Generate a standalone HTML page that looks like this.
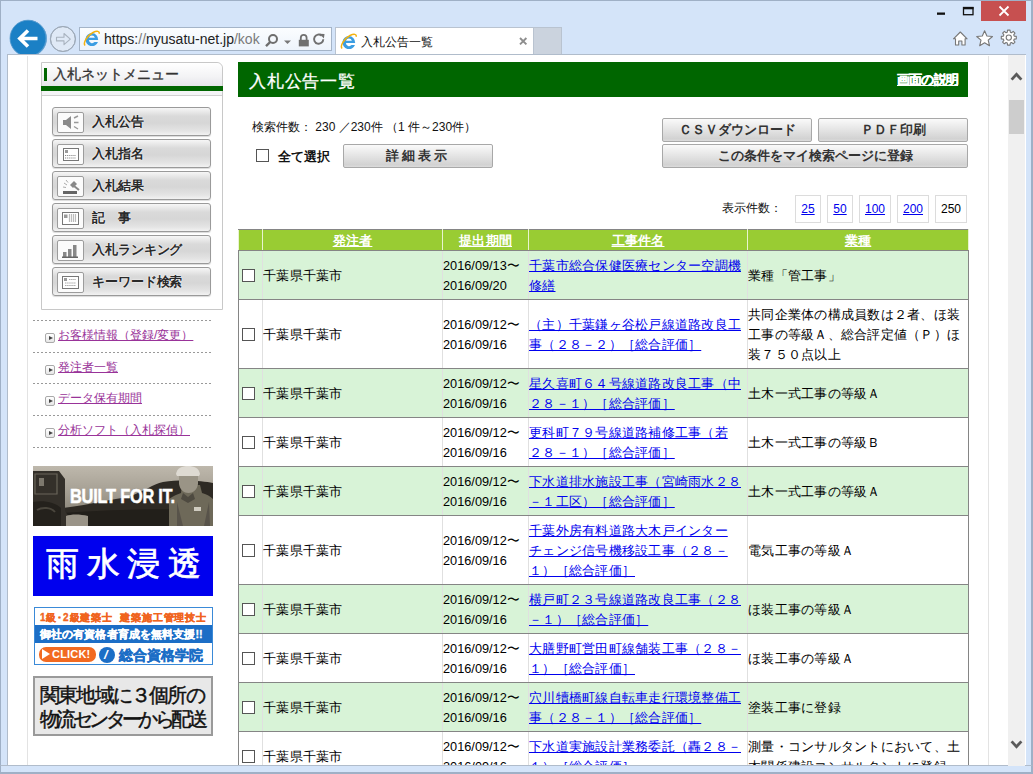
<!DOCTYPE html>
<html><head><meta charset="utf-8">
<style>
*{box-sizing:border-box}
html,body{margin:0;padding:0}
body{width:1033px;height:774px;overflow:hidden;position:relative;background:#d4e4f9;font-family:"Liberation Sans",sans-serif;color:#000}
.abs{position:absolute}
#frame{left:0;top:0;width:1033px;height:774px;border:1px solid #9fb0c6;border-width:1px 2px 2px 1px}
/* chrome */
#back{left:10px;top:20px;width:37px;height:37px;border-radius:50%;background:#1e81c6;border:1px solid #6aa6d6}
#fwd{left:50px;top:26px;width:26px;height:26px;border-radius:50%;border:1px solid #9aa7b8;background:#dfe9f6}
#addr{left:79px;top:27px;width:253px;height:24px;border:1px solid #a4b4c8;background:linear-gradient(#fbfdff,#eef4fb)}
#url{left:104px;top:30.5px;font-size:14px;color:#222;white-space:nowrap;letter-spacing:0}
#url .g{color:#7a7a7a}
#tab{left:335px;top:27px;width:199px;height:29px;border:1px solid #b9c3d0;border-bottom:none;background:#fff}
#tabtxt{left:361px;top:33.5px;font-size:12px;color:#111;white-space:nowrap}
#tabx{left:518px;top:33px;font-size:14px;color:#777}
#tab2{left:534px;top:27px;width:28px;height:29px;background:#cbd3de;border:1px solid #b9c3d0;border-bottom:none;border-left:none}
#close{left:981px;top:1px;width:45px;height:20px;background:#c75050}
/* content */
#content{left:7px;top:54px;width:1019px;height:712px;background:#fff;border-top:1px solid #b0bccb;border-left:1px solid #b0bccb;overflow:hidden}
#sb{left:1008px;top:55px;width:17px;height:711px;background:#f0f0f0}
#thumb{left:1009px;top:100px;width:15px;height:34px;background:#cdcdcd}
#vl1{left:27px;top:56px;width:1px;height:710px;background:#e3e3e3}
#vl2{left:988px;top:56px;width:1px;height:710px;background:#e3e3e3}

/* sidebar */
#menu{left:41px;top:62px;width:182px;height:248px;border:1px solid #c8c8c8;border-top-right-radius:6px;background:#fff}
#mhead{left:42px;top:63px;width:180px;height:23px;background:linear-gradient(#ffffff,#f3f3f5 60%,#e6e6ea);border-top-right-radius:6px}
#mbar{left:44px;top:68px;width:3px;height:13px;background:#006600}
#mtitle{left:53px;top:65px;font-size:13.6px;color:#333;white-space:nowrap;line-height:19px;letter-spacing:0.05px;-webkit-text-stroke:0.35px #333}
#mgreen{left:41px;top:86px;width:182px;height:5px;background:#006600}
#mstrip{left:42px;top:91px;width:180px;height:5px;background:#f4f4f6;border-bottom:1px solid #d0d0d0}
.mbtn{position:absolute;left:52px;width:159px;height:29px;border:1px solid #9a9a9a;border-radius:3px;background:linear-gradient(#f6f6f6,#dadada 30%,#d6d6d6 55%,#e4e4e4 85%,#f2f2f2);box-shadow:0 1px 1px rgba(0,0,0,.15)}
.mico{position:absolute;left:4px;top:4px;width:27px;height:21px;overflow:hidden;background:#fbfbfb;border:1px solid #9c9c9c;border-radius:2px}
.mtxt{position:absolute;left:39px;top:5px;font-size:13.4px;letter-spacing:-0.1px;font-weight:bold;color:#2a2a2a;white-space:nowrap;line-height:18px;text-shadow:0 0 2px #fff,0 0 1px #fff}
.dot{position:absolute;left:33px;width:178px;height:1px;background:repeating-linear-gradient(90deg,#999 0 2px,transparent 2px 4px)}
.lnk{position:absolute;left:58px;font-size:12px;color:#993399;text-decoration:underline;white-space:nowrap;line-height:16px}
.arr{position:absolute;left:45px;width:10px;height:10px;border:1px solid #aaa;border-radius:2px;background:linear-gradient(#fff,#e6e6e6)}
.arr:after{content:"";position:absolute;left:3px;top:2px;border-left:4px solid #444;border-top:2.5px solid transparent;border-bottom:2.5px solid transparent}
.ban{position:absolute;left:33px;width:180px;height:60px;overflow:hidden}
/* main */
#mainhead{left:238px;top:62px;width:730px;height:35px;background:#006600}
#maintitle{left:249px;top:70.5px;font-size:16.5px;color:#fff;white-space:nowrap;line-height:20px;letter-spacing:0.8px;-webkit-text-stroke:0.3px #fff}
#help{left:897px;top:72px;font-size:13px;color:#fff;font-weight:bold;text-decoration:underline;white-space:nowrap;line-height:16px;letter-spacing:-0.8px;-webkit-text-stroke:0.4px #fff}
#count{left:252px;top:120px;font-size:12px;white-space:nowrap;line-height:15px;color:#111}
#chkall{left:256px;top:149px;width:13px;height:13px;border:1px solid #555;background:#fff}
#allsel{left:278px;top:149px;font-size:12.5px;font-weight:bold;white-space:nowrap;line-height:16px;color:#111}
.gbtn{position:absolute;border:1px solid #a8a8a8;border-radius:2px;background:linear-gradient(#fafafa,#e6e6e6 45%,#d2d2d2 90%,#dcdcdc);font-weight:bold;color:#333;text-align:center;white-space:nowrap;font-size:13px}
#dispcnt{left:722px;top:201px;font-size:12px;white-space:nowrap;line-height:15px;color:#111}
.pg{position:absolute;top:195px;height:28px;border:1px solid #dcdcdc;font-size:12px;text-align:center;line-height:26px}
.pg a{color:#0000ee;text-decoration:underline}
#tbl{position:absolute;left:238px;top:229px;width:730px;border-collapse:collapse;table-layout:fixed;font-size:13px;line-height:20px;letter-spacing:0.25px}
#tbl td{border:1px solid #858585;border-left-color:#e0e0e0;border-right-color:#e0e0e0;padding:1px 0 0 0;vertical-align:middle;white-space:nowrap;overflow:hidden}
#tbl tr.h td{background:#99cc33;color:#fff;font-weight:bold;text-align:center;text-decoration:underline;height:21px;line-height:18px;border-top-color:#858585;border-bottom-color:#858585;border-left-color:#e8f4d0;border-right-color:#e8f4d0}
#tbl tr.g td{background:#d8f3d7}
#tbl td:first-child{border-left-color:#858585}
#tbl td:last-child{border-right-color:#858585}
#tbl a{color:#0000ee;text-decoration:underline}
.d{display:inline-block;vertical-align:middle;transform:scaleX(.98);transform-origin:0 50%;letter-spacing:0}
.cb{display:inline-block;width:13px;height:13px;border:1px solid #555;background:#fff;vertical-align:middle;margin-left:3px;position:relative;top:-1px}
</style></head><body>
<div id="frame" class="abs"></div>
<div id="back" class="abs"></div>
<div id="fwd" class="abs"></div>
<div id="addr" class="abs"></div>
<div id="url" class="abs">https:<span class="g">//</span>nyusatu-net.jp<span class="g">/kok</span></div>
<div id="tab" class="abs"></div>
<div id="tabtxt" class="abs">入札公告一覧</div>
<div id="tab2" class="abs"></div>
<div id="close" class="abs"></div>
<svg class="abs" style="left:0;top:0" width="1033" height="56" viewBox="0 0 1033 56">
<defs>
<g id="ie">
<path d="M8.4 2.6a6.5 6.5 0 1 0 6.1 8.9h-3.5a3.2 3.2 0 0 1-5.6-2h9.3a6.5 6.5 0 0 0-6.3-6.9zM5.5 7.2a3.1 3.1 0 0 1 5.9 0z" fill="#3b9de2" fill-rule="evenodd"/>
<path d="M1.6 15C-0.8 12.5 3.5 5.2 9.5 2 13.5 0 16.3 0.6 15.6 3.2" fill="none" stroke="#f3b20f" stroke-width="1.5"/>
</g>
</defs>
<circle cx="28" cy="38.2" r="18" fill="#1b80c5" stroke="#5f9fd0" stroke-width="0.8"/>
<path d="M37.5 38.5H20.5M28 30.5l-8.2 8 8.2 8" fill="none" stroke="#fff" stroke-width="3.6" stroke-linecap="butt" stroke-linejoin="miter"/>
<circle cx="62.8" cy="39" r="12.5" fill="none" stroke="#9fabb9" stroke-width="1"/>
<path d="M56.5 37.3h7.5v-3.8l6.3 5.6-6.3 5.6v-3.8h-7.5z" fill="none" stroke="#a9b3bf" stroke-width="1.1" stroke-linejoin="round"/>
<use href="#ie" x="83.5" y="30.5"/>
<use href="#ie" x="340.5" y="33.5"/>
<g transform="translate(0 1.5)">
<circle cx="273" cy="37.5" r="4" fill="none" stroke="#6e6e6e" stroke-width="2"/>
<path d="M270.2 40.5l-4.2 4.2" stroke="#6e6e6e" stroke-width="2.4"/>
<path d="M284 39h7l-3.5 3.5z" fill="#777"/>
<path d="M300.8 38.5v-2.3a2.9 2.9 0 0 1 5.8 0v2.3" fill="none" stroke="#707070" stroke-width="1.8"/>
<rect x="298.8" y="38.3" width="10" height="6.6" fill="#707070"/>
<path d="M323.3 37.8a4.6 4.6 0 1 1-1.6-3.6" fill="none" stroke="#707070" stroke-width="1.9"/>
<path d="M319.5 32.2l5 0.2-0.6 4.6z" fill="#707070"/>
</g>
<path d="M520 38l6.4 6.4M526.4 38l-6.4 6.4" stroke="#8e8e8e" stroke-width="1.9"/>
<rect x="937" y="12.5" width="8" height="2.3" fill="#111"/>
<rect x="963.5" y="7.5" width="9.5" height="7.2" fill="none" stroke="#111" stroke-width="1.3"/>
<rect x="963" y="7" width="10.5" height="2.3" fill="#111"/>
<path d="M999.5 6.5l9 9M1008.5 6.5l-9 9" stroke="#fff" stroke-width="1.8"/>
<path d="M953.5 38.8l6.8-6.8 6.8 6.8h-2v6.2h-3.2v-4h-3.2v4h-3.2v-6.2z" fill="#fff" stroke="#777" stroke-width="1.1" stroke-linejoin="round"/>
<path d="M984.6 30.8l2.3 5.2 5.6 0.5-4.3 3.7 1.3 5.5-4.9-2.9-4.9 2.9 1.3-5.5-4.3-3.7 5.6-0.5z" fill="#fff" stroke="#777" stroke-width="1.1" stroke-linejoin="round"/>
<path d="M1014.19 36.08 L1016.30 36.35 L1016.30 38.85 L1014.19 39.12 L1013.69 40.34 L1014.98 42.02 L1013.22 43.78 L1011.54 42.49 L1010.32 42.99 L1010.05 45.10 L1007.55 45.10 L1007.28 42.99 L1006.06 42.49 L1004.38 43.78 L1002.62 42.02 L1003.91 40.34 L1003.41 39.12 L1001.30 38.85 L1001.30 36.35 L1003.41 36.08 L1003.91 34.86 L1002.62 33.18 L1004.38 31.42 L1006.06 32.71 L1007.28 32.21 L1007.55 30.10 L1010.05 30.10 L1010.32 32.21 L1011.54 32.71 L1013.22 31.42 L1014.98 33.18 L1013.69 34.86Z" fill="#fff" stroke="#777" stroke-width="1.1" stroke-linejoin="round"/><circle cx="1008.8" cy="37.6" r="2.6" fill="none" stroke="#777" stroke-width="1.1"/>
</svg>
<div id="content" class="abs"></div>

<div id="menu" class="abs"></div>
<div id="mhead" class="abs"></div>
<div id="mbar" class="abs"></div>
<div id="mtitle" class="abs">入札ネットメニュー</div>
<div id="mgreen" class="abs"></div>
<div id="mstrip" class="abs"></div>
<div class="mbtn" style="top:107px"><div class="mico"><svg width="25" height="19" viewBox="0 0 25 19"><path d="M5 7h3l5-4v13l-5-4H5z" fill="#8a8a8a"/><path d="M16 5l4-2M16 9.5h4.5M16 13.5l4 2.5" stroke="#999" stroke-width="1.4"/></svg></div><div class="mtxt">入札公告</div></div>
<div class="mbtn" style="top:139px"><div class="mico"><svg width="25" height="19" viewBox="0 0 25 19"><rect x="5.5" y="3.5" width="15" height="12" fill="#fff" stroke="#777"/><rect x="7" y="5" width="3" height="3" fill="#999"/><path d="M7 10.5h11M7 13h11" stroke="#888" stroke-width="1.2" stroke-dasharray="1.2 0.9"/></svg></div><div class="mtxt">入札指名</div></div>
<div class="mbtn" style="top:171px"><div class="mico"><svg width="25" height="19" viewBox="0 0 25 19"><path d="M12 8l4-4 3 3-4 4z" fill="#888"/><path d="M16 9l5 4" stroke="#888" stroke-width="2"/><path d="M6 6l3 2M5 10l3 0.5M8 3l2 2.5" stroke="#aaa" stroke-width="1"/><rect x="5" y="14" width="14" height="3" fill="#666"/></svg></div><div class="mtxt">入札結果</div></div>
<div class="mbtn" style="top:203px"><div class="mico"><svg width="25" height="19" viewBox="0 0 25 19"><rect x="4.5" y="3.5" width="16" height="12" fill="#fff" stroke="#777"/><rect x="6" y="5.5" width="3.5" height="3.5" fill="#999"/><path d="M11.5 5v8M13.5 5v8M15.5 5v8M17.5 5v8" stroke="#bbb" stroke-width="1.2"/></svg></div><div class="mtxt">記　事</div></div>
<div class="mbtn" style="top:235px"><div class="mico"><svg width="25" height="19" viewBox="0 0 25 19"><rect x="5" y="11" width="3.5" height="5" fill="#888"/><rect x="10" y="8" width="3.5" height="8" fill="#888"/><rect x="15" y="4" width="3.5" height="12" fill="#888"/><rect x="4" y="15.5" width="16" height="1.5" fill="#666"/></svg></div><div class="mtxt">入札ランキング</div></div>
<div class="mbtn" style="top:267px"><div class="mico"><svg width="25" height="19" viewBox="0 0 25 19"><rect x="4.5" y="3.5" width="16" height="12" fill="#fff" stroke="#777"/><rect x="6" y="5" width="3" height="3" fill="#999"/><path d="M11 6.5h7M7 10h11M7 12.5h11" stroke="#aaa" stroke-width="1.2" stroke-dasharray="1.5 0.6"/></svg></div><div class="mtxt">キーワード検索</div></div>
<div class="dot" style="top:320px"></div>
<div class="arr" style="top:333px"></div><div class="lnk" style="top:327px">お客様情報（登録/変更）</div>
<div class="dot" style="top:352px"></div>
<div class="arr" style="top:365px"></div><div class="lnk" style="top:359px">発注者一覧</div>
<div class="dot" style="top:383px"></div>
<div class="arr" style="top:396px"></div><div class="lnk" style="top:390px">データ保有期間</div>
<div class="dot" style="top:415px"></div>
<div class="arr" style="top:428px"></div><div class="lnk" style="top:422px">分析ソフト（入札探偵）</div>
<div class="dot" style="top:447px"></div>
<div class="ban" style="top:466px"><svg width="180" height="60" viewBox="0 0 180 60">
<defs><linearGradient id="sky" x1="0" y1="0" x2="0" y2="1"><stop offset="0" stop-color="#beb8ac"/><stop offset="0.45" stop-color="#a49e92"/><stop offset="1" stop-color="#7a7468"/></linearGradient></defs>
<rect width="180" height="60" fill="url(#sky)"/>
<path d="M30 42C60 38 80 33 95 31 110 26 120 18 130 16 150 13 170 15 180 17V60H30z" fill="#2e2a24"/>
<path d="M30 47C70 44 120 42 180 44V60H30z" fill="#221f1a"/>
<path d="M0 5h26l6 8v32l4 6v9H0z" fill="#34302a"/>
<path d="M2 8h22v20H2z" fill="none" stroke="#6a655a" stroke-width="1.2"/>
<rect x="6" y="12" width="5" height="8" fill="#7d786d"/>
<path d="M0 36c10-2 22 0 28 6v18H0z" fill="#24211c"/>
<path d="M4 44c5-3 14-3 18 2" stroke="#4a463d" stroke-width="2" fill="none"/>
<path d="M33 50c5-2 14-2 22 0v10H33z" fill="#9a9488"/>
<path d="M136 60V33c4-3 9-5 12-6l1-8h18l2 8c4 1 8 3 11 6V60z" fill="#6e6959"/>
<path d="M143 8c1-6 6-8 12-8s11 2 12 8l-1 2h-22z" fill="#dedad2"/>
<path d="M146 10h19v8c-1 6-5 9-9.5 9S147 24 146 18z" fill="#9a9486"/>
<path d="M150 27l5 4 5-4 2 6-7 4-7-4z" fill="#4e4a40"/>
<rect x="161" y="41" width="7" height="4" fill="#d0ccc0"/>
<path d="M144 36l6 24h-6zM176 36l-5 24h6z" fill="#58534a"/>
<text x="37" y="37.3" fill="#fff" font-family="Liberation Sans" font-weight="bold" font-size="20.5" stroke="#fff" stroke-width="0.5" transform="translate(37 0) scale(0.8 1) translate(-37 0)" letter-spacing="-0.3">BUILT FOR IT.</text>
</svg></div>
<div class="ban" style="top:536px;background:#0000ee"><div style="position:absolute;left:13px;top:8px;font-size:33px;line-height:40px;color:#fff;letter-spacing:7.5px;white-space:nowrap;-webkit-text-stroke:0.7px #fff">雨水浸透</div></div>
<div class="ban" style="top:607px;left:34px;width:179px;height:58px;border:1px solid #3a8ad8;background:#fff">
<div style="position:absolute;left:5px;top:3px;font-size:10px;line-height:13px;font-weight:bold;color:#f0641e;white-space:nowrap;letter-spacing:0.85px;-webkit-text-stroke:0.35px #f0641e">1級･2級建築士&nbsp;&nbsp;建築施工管理技士</div>
<div style="position:absolute;left:0;top:17px;width:177px;height:18px;background:#1c6ec6"></div>
<div style="position:absolute;left:5px;top:19px;font-size:10.8px;line-height:14px;font-weight:bold;color:#fff;white-space:nowrap;letter-spacing:0.1px;-webkit-text-stroke:0.3px #fff">御社の有資格者育成を無料支援!!</div>
<div style="position:absolute;left:4px;top:39px;width:57px;height:15px;border-radius:7px;background:#f26a21"></div>
<div style="position:absolute;left:7px;top:41px;width:0;height:0;border-left:8px solid #fff;border-top:5.5px solid transparent;border-bottom:5.5px solid transparent"></div>
<div style="position:absolute;left:17px;top:40px;font-size:11px;line-height:13px;font-weight:bold;color:#fff;white-space:nowrap;letter-spacing:0.2px">CLICK!</div>
<div style="position:absolute;left:64px;top:39px;width:16px;height:16px;border-radius:50%;background:#1c6ec6"></div>
<div style="position:absolute;left:69px;top:39px;font-size:13px;line-height:16px;font-style:italic;font-weight:bold;color:#fff">/</div>
<div style="position:absolute;left:84px;top:40px;font-size:14px;line-height:15px;font-weight:bold;color:#1c6ec6;white-space:nowrap;letter-spacing:0px;-webkit-text-stroke:0.4px #1c6ec6">総合資格学院</div>
</div>
<div class="ban" style="top:676px;background:#e8e8e8;border:2px solid #9a9a9a"><div style="position:absolute;left:5px;top:6px;font-family:'Liberation Serif',serif;font-size:19.5px;line-height:24px;color:#111;white-space:nowrap;letter-spacing:-1.8px;-webkit-text-stroke:0.45px #111">関東地域に３個所の</div><div style="position:absolute;left:5px;top:30px;font-family:'Liberation Serif',serif;font-size:19.5px;line-height:24px;color:#111;white-space:nowrap;letter-spacing:-3.6px;-webkit-text-stroke:0.45px #111">物流センターから配送</div></div>

<div id="mainhead" class="abs"></div>
<div id="maintitle" class="abs">入札公告一覧</div>
<div id="help" class="abs">画面の説明</div>
<div id="count" class="abs">検索件数： 230 ／230件 （1 件～230件）</div>
<div id="chkall" class="abs"></div>
<div id="allsel" class="abs">全て選択</div>
<div class="gbtn" style="left:343px;top:144px;width:150px;height:24px;line-height:22px;letter-spacing:3px">詳細表示</div>
<div class="gbtn" style="left:662px;top:118px;width:150px;height:24px;line-height:22px">ＣＳＶダウンロード</div>
<div class="gbtn" style="left:818px;top:118px;width:150px;height:24px;line-height:22px">ＰＤＦ印刷</div>
<div class="gbtn" style="left:662px;top:144px;width:306px;height:24px;line-height:22px">この条件をマイ検索ページに登録</div>
<div id="dispcnt" class="abs">表示件数：</div>
<div class="pg" style="left:795px;width:26px"><a>25</a></div>
<div class="pg" style="left:827px;width:26px"><a>50</a></div>
<div class="pg" style="left:859px;width:32px"><a>100</a></div>
<div class="pg" style="left:897px;width:32px"><a>200</a></div>
<div class="pg" style="left:935px;width:32px">250</div>
<table id="tbl">
<colgroup><col style="width:24px"><col style="width:180px"><col style="width:86px"><col style="width:219px"><col style="width:221px"></colgroup>
<tr class="h"><td></td><td>発注者</td><td>提出期間</td><td>工事件名</td><td>業種</td></tr>
<tr class="g" style="height:49px"><td><span class="cb"></span></td><td>千葉県千葉市</td><td><span class="d">2016/09/13〜<br>2016/09/20</span></td><td><a>千葉市総合保健医療センター空調機<br>修繕</a></td><td>業種「管工事」</td></tr>
<tr style="height:69px"><td><span class="cb"></span></td><td>千葉県千葉市</td><td><span class="d">2016/09/12〜<br>2016/09/16</span></td><td><a>（主）千葉鎌ヶ谷松戸線道路改良工<br>事（２８－２）［総合評価］</a></td><td>共同企業体の構成員数は２者、ほ装<br>工事の等級Ａ、総合評定値（Ｐ）ほ<br>装７５０点以上</td></tr>
<tr class="g" style="height:49px"><td><span class="cb"></span></td><td>千葉県千葉市</td><td><span class="d">2016/09/12〜<br>2016/09/16</span></td><td><a>星久喜町６４号線道路改良工事（中<br>２８－１）［総合評価］</a></td><td>土木一式工事の等級Ａ</td></tr>
<tr style="height:49px"><td><span class="cb"></span></td><td>千葉県千葉市</td><td><span class="d">2016/09/12〜<br>2016/09/16</span></td><td><a>更科町７９号線道路補修工事（若<br>２８－１）［総合評価］</a></td><td>土木一式工事の等級Ｂ</td></tr>
<tr class="g" style="height:49px"><td><span class="cb"></span></td><td>千葉県千葉市</td><td><span class="d">2016/09/12〜<br>2016/09/16</span></td><td><a>下水道排水施設工事（宮崎雨水２８<br>－１工区）［総合評価］</a></td><td>土木一式工事の等級Ａ</td></tr>
<tr style="height:69px"><td><span class="cb"></span></td><td>千葉県千葉市</td><td><span class="d">2016/09/12〜<br>2016/09/16</span></td><td><a>千葉外房有料道路大木戸インター<br>チェンジ信号機移設工事（２８－<br>１）［総合評価］</a></td><td>電気工事の等級Ａ</td></tr>
<tr class="g" style="height:49px"><td><span class="cb"></span></td><td>千葉県千葉市</td><td><span class="d">2016/09/12〜<br>2016/09/16</span></td><td><a>横戸町２３号線道路改良工事（２８<br>－１）［総合評価］</a></td><td>ほ装工事の等級Ａ</td></tr>
<tr style="height:49px"><td><span class="cb"></span></td><td>千葉県千葉市</td><td><span class="d">2016/09/12〜<br>2016/09/16</span></td><td><a>大膳野町営田町線舗装工事（２８－<br>１）［総合評価］</a></td><td>ほ装工事の等級Ａ</td></tr>
<tr class="g" style="height:49px"><td><span class="cb"></span></td><td>千葉県千葉市</td><td><span class="d">2016/09/12〜<br>2016/09/16</span></td><td><a>穴川犢橋町線自転車走行環境整備工<br>事（２８－１）［総合評価］</a></td><td>塗装工事に登録</td></tr>
<tr style="height:49px"><td><span class="cb"></span></td><td>千葉県千葉市</td><td><span class="d">2016/09/12〜<br>2016/09/16</span></td><td><a>下水道実施設計業務委託（轟２８－<br>１）［総合評価］</a></td><td>測量・コンサルタントにおいて、土<br>木関係建設コンサルタントに登録</td></tr>
</table>
<div id="vl1" class="abs"></div>
<div id="vl2" class="abs"></div>
<div class="abs" style="left:0;top:765px;width:1033px;height:9px;background:#d4e4f9;border-top:1px solid #b0bccb;border-bottom:2px solid #9fb0c6;border-left:1px solid #9fb0c6;border-right:2px solid #9fb0c6"></div>
<div id="sb" class="abs"></div>
<div id="thumb" class="abs"></div>
<svg class="abs" style="left:1008px;top:60px" width="17" height="700" viewBox="0 0 17 700"><path d="M3.6 19.6l4.9-5.2 4.9 5.2" fill="none" stroke="#5a5a5a" stroke-width="2.8"/><path d="M3.6 681.4l4.9 5.2 4.9-5.2" fill="none" stroke="#5a5a5a" stroke-width="2.8"/></svg>
</body></html>
